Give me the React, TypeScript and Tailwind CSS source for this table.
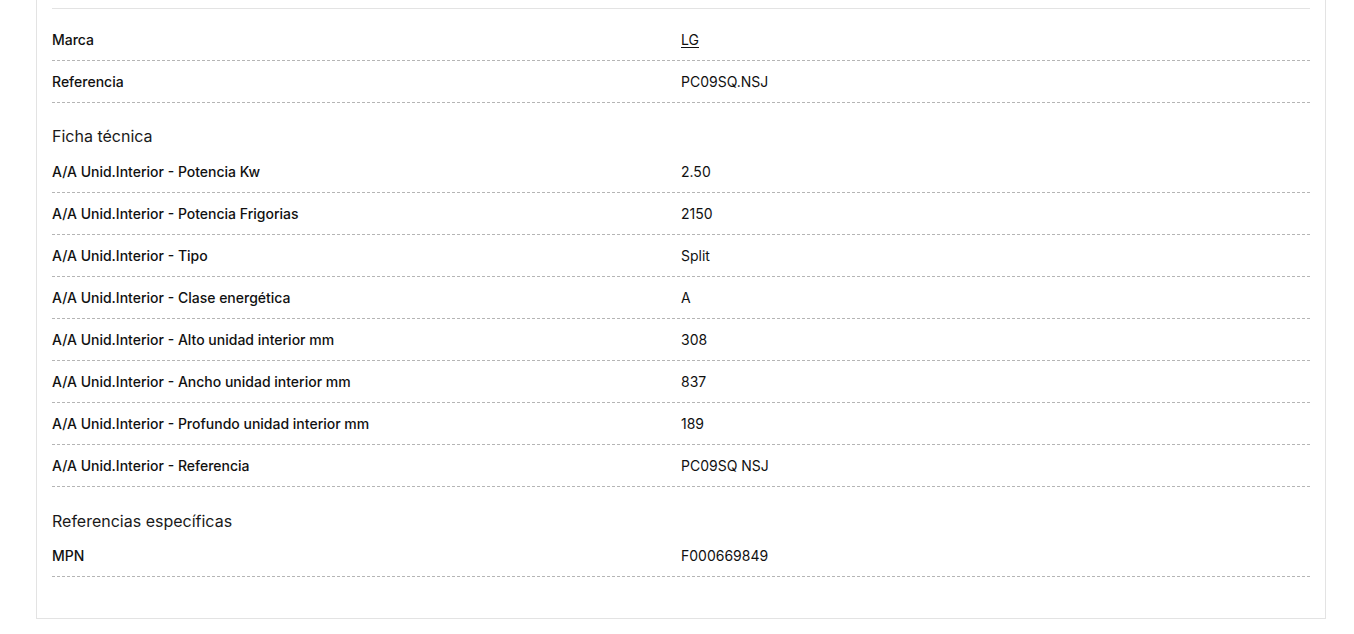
const GENERAL = [
  { label: "Marca", value: "LG", link: true },
  { label: "Referencia", value: "PC09SQ.NSJ" },
];

const FICHA = [
  { label: "A/A Unid.Interior - Potencia Kw", value: "2.50" },
  { label: "A/A Unid.Interior - Potencia Frigorias", value: "2150" },
  { label: "A/A Unid.Interior - Tipo", value: "Split" },
  { label: "A/A Unid.Interior - Clase energética", value: "A" },
  { label: "A/A Unid.Interior - Alto unidad interior mm", value: "308" },
  { label: "A/A Unid.Interior - Ancho unidad interior mm", value: "837" },
  { label: "A/A Unid.Interior - Profundo unidad interior mm", value: "189" },
  { label: "A/A Unid.Interior - Referencia", value: "PC09SQ NSJ" },
];

const REFS = [{ label: "MPN", value: "F000669849" }];

type Row = { label: string; value: string; link?: boolean };

function SpecRow({ row }: { row: Row }) {
  return (
    <div className="grid grid-cols-2 pt-[11px] pb-[10px] border-b border-dashed border-[#b5b5b5] text-[14px] leading-5 text-[#111]">
      <span className="font-medium">{row.label}</span>
      {row.link ? (
        <a href="#" className="underline underline-offset-2 w-fit">
          {row.value}
        </a>
      ) : (
        <span>{row.value}</span>
      )}
    </div>
  );
}

export default function App() {
  return (
    <div className="min-h-screen bg-white font-['Inter',sans-serif]">
      <div className="ml-[36px] mr-[28px] border border-t-0 border-[#e3e3e3] px-[15px] pb-[41px]">
        {/* tab header edge */}
        <div className="h-[9px] border-b border-[#e3e3e3]" />

        <div className="pt-[10px]">
          {GENERAL.map((row) => (
            <SpecRow key={row.label} row={row} />
          ))}
        </div>

        <h3 className="pt-[21px] pb-[3px] text-[16px] leading-6 text-[#1a1a1a]">Ficha técnica</h3>
        <div>
          {FICHA.map((row) => (
            <SpecRow key={row.label} row={row} />
          ))}
        </div>

        <h3 className="pt-[22px] pb-[2px] text-[16px] leading-6 text-[#1a1a1a]">Referencias específicas</h3>
        <div>
          {REFS.map((row) => (
            <SpecRow key={row.label} row={row} />
          ))}
        </div>
      </div>
    </div>
  );
}
